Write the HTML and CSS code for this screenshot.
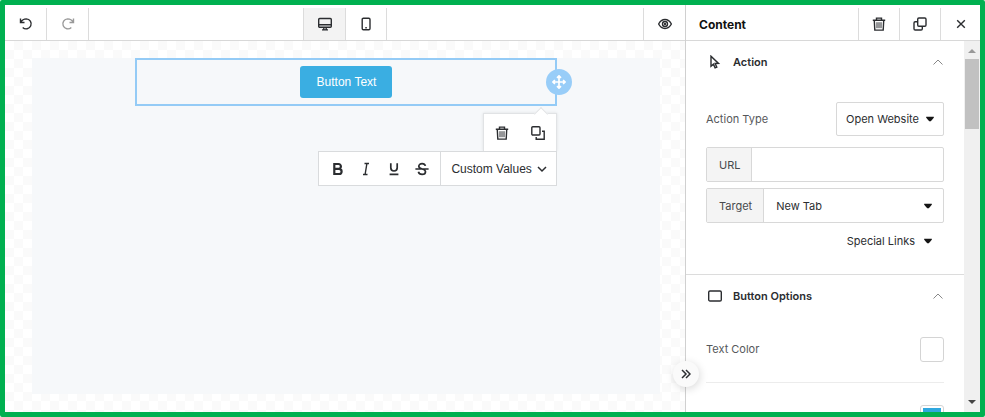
FILE: index.html
```html
<!DOCTYPE html>
<html lang="en">
<head>
<meta charset="utf-8">
<meta name="viewport" content="width=device-width, initial-scale=1">
<title>Email editor</title>
<link rel="stylesheet" href="styles.css">
</head>
<body>
<svg class="sprite" aria-hidden="true">
  <symbol id="trash" viewBox="0 0 14 14"><path d="M.8 3.300h12.400M4.500 3V1.100h5V3M2.300 3.600l.5 9.500h8.400l.5-9.500"/><path stroke-width="1" d="M5 5.200v6M7 5.200v6M9 5.200v6"/></symbol>
  <symbol id="caret" viewBox="0 0 8 6"><path d="M.2.700h7.600v1L4.800 5.200H3.200L.2 1.700z"/></symbol>
  <symbol id="up" viewBox="0 0 12 8"><path d="M1.500 6.500 6 2l4.500 4.500"/></symbol>
</svg>
<div class="app">
  <main class="editor">
    <header class="bar">
      <div class="group">
        <button class="tool line-right" aria-label="Undo"><svg class="icon" viewBox="0 0 14 14"><path d="M1.500 1.500v4h4M1.900 5.200C3 3 5 1.900 7.300 1.900a5 5 0 1 1-3.600 8.600"/></svg></button>
        <button class="tool line-right muted" aria-label="Redo"><svg class="icon" viewBox="0 0 14 14"><path d="M12.500 1.500v4h-4M12.100 5.200C11 3 9 1.900 6.700 1.900a5 5 0 1 0 3.600 8.600"/></svg></button>
      </div>
      <div class="group">
        <button class="tool line-left active" aria-label="Desktop view"><svg class="icon" viewBox="0 0 14 14"><rect x=".7" y="1.500" width="12.600" height="8.800" rx="1"/><path d="M1 7.700h12M5.800 10.200v2.300M8.200 10.200v2.300M4 12.900h6"/></svg></button>
        <button class="tool line-left line-right" aria-label="Mobile view"><svg class="icon" viewBox="0 0 14 14"><rect x="3.200" y="1.200" width="7.800" height="11.600" rx="1.200"/><path d="M6.300 10.700h1.500"/></svg></button>
      </div>
      <div class="group end">
        <button class="tool line-left" aria-label="Preview"><svg class="icon" viewBox="0 0 14 14"><path d="M.6 7C2 4.300 4.200 2.500 7 2.500S12 4.300 13.400 7C12 9.700 9.800 11.500 7 11.500S2 9.700.6 7z"/><circle cx="7" cy="7" r="2.500"/><circle cx="7" cy="7" r=".5"/></svg></button>
      </div>
    </header>
    <div class="canvas">
      <div class="sheet">
        <div class="block">
          <button class="cta">Button Text</button>
          <button class="move" aria-label="Move"><svg class="icon bold" viewBox="0 0 14 14"><path d="M7 .9v12.200M.9 7h12.200M5 2.900l2-2 2 2M5 11.100l2 2 2-2M2.900 5l-2 2 2 2M11.100 5l2 2-2 2"/></svg></button>
          <div class="popover">
            <div class="actions">
              <button class="plain" aria-label="Delete"><svg class="icon" viewBox="0 0 14 14"><use href="#trash"/></svg></button>
              <button class="plain" aria-label="Duplicate"><svg class="icon" viewBox="0 0 14 14"><rect x=".8" y=".8" width="8.200" height="8.200" rx="1"/><path d="M11 5.200h2.200v8H5.200V11"/></svg></button>
            </div>
            <div class="format">
              <div class="styles">
                <button class="plain" aria-label="Bold"><svg class="icon strong" viewBox="0 0 14 14"><path d="M3.300 2h4.200a2.400 2.400 0 0 1 0 4.800H3.300zM3.300 6.800H8a2.600 2.600 0 0 1 0 5.200H3.300z"/></svg></button>
                <button class="plain" aria-label="Italic"><svg class="icon" viewBox="0 0 14 14"><path d="M5.500 1.500H10M4 12.500h4.500M7.900 1.500 6.100 12.500"/></svg></button>
                <button class="plain" aria-label="Underline"><svg class="icon bold" viewBox="0 0 14 14"><path d="M3.800 1.200v4.600a3.200 3.200 0 0 0 6.400 0V1.200M2.600 12.300h8.800"/></svg></button>
                <button class="plain" aria-label="Strikethrough"><svg class="icon bold" viewBox="0 0 14 14"><path d="M10.400 3.900C10 2.300 8.900 1.600 7.100 1.600 5.200 1.600 3.800 2.600 3.800 4.200c0 1.700 1.700 2.300 3.400 2.800s3.300 1.200 3.300 2.700-1.500 2.700-3.400 2.700c-1.900 0-3.300-.9-3.700-2.600M.4 7h13.200"/></svg></button>
              </div>
              <button class="values">Custom Values<svg class="chevron" viewBox="0 0 10 10"><path d="m1 3 4 4 4-4"/></svg></button>
            </div>
          </div>
        </div>
      </div>
    </div>
  </main>
  <aside class="panel">
    <header class="bar">
      <h1 class="title">Content</h1>
      <button class="tool line-left" aria-label="Delete"><svg class="icon" viewBox="0 0 14 14"><use href="#trash"/></svg></button>
      <button class="tool line-left" aria-label="Duplicate"><svg class="icon" viewBox="0 0 14 14"><rect x="4.700" y="1" width="8.300" height="8.300" rx="1.200"/><path d="M4.500 4.700H2.200A1.200 1.200 0 0 0 1 5.900v5.900A1.200 1.200 0 0 0 2.200 13h5.900a1.200 1.200 0 0 0 1.200-1.200V9.500"/></svg></button>
      <button class="tool line-left" aria-label="Close"><svg class="icon" viewBox="0 0 14 14"><path d="m3.200 3.200 7.600 7.600M10.800 3.200l-7.600 7.600"/></svg></button>
    </header>
    <div class="scroller">
      <div class="content">
        <section class="section">
          <button class="heading"><svg class="icon" viewBox="0 0 14 14"><path d="M3 1.200v10l2.400-2.100 1.700 3.800 1.700-.8-1.700-3.600 3.400-.1z"/></svg><span>Action</span><svg class="fold" viewBox="0 0 12 8"><use href="#up"/></svg></button>
          <div class="row type-row">
            <label class="label" for="type">Action Type</label>
            <div class="picker boxed"><select id="type"><option>Open Website</option></select><svg class="caret" viewBox="0 0 8 6"><use href="#caret"/></svg></div>
          </div>
          <div class="field"><label class="addon" for="url">URL</label><input id="url" type="text"></div>
          <div class="field"><label class="addon" for="target">Target</label><div class="picker grow"><select id="target"><option>New Tab</option></select><svg class="caret" viewBox="0 0 8 6"><use href="#caret"/></svg></div></div>
          <button class="links">Special Links<svg class="caret" viewBox="0 0 8 6"><use href="#caret"/></svg></button>
        </section>
        <section class="section">
          <button class="heading"><svg class="icon" viewBox="0 0 14 14"><rect x=".7" y="2" width="12.600" height="10" rx="1.300"/></svg><span>Button Options</span><svg class="fold" viewBox="0 0 12 8"><use href="#up"/></svg></button>
          <div class="row color-row"><span class="label">Text Color</span><button class="swatch" aria-label="Text color"></button></div>
          <div class="row color-row"><span class="label"></span><button class="swatch blue" aria-label="Background color"></button></div>
        </section>
      </div>
      <div class="track" aria-hidden="true">
        <svg class="arrow dim" viewBox="0 0 8 6"><path d="M0 5h8L4 1z"/></svg>
        <div class="thumb"></div>
        <svg class="arrow" viewBox="0 0 8 6"><path d="M0 1h8L4 5z"/></svg>
      </div>
    </div>
    <button class="collapse" aria-label="Collapse panel"><svg class="chevron" viewBox="0 0 10 10"><path d="m1 1 4 4-4 4M5 1l4 4-4 4"/></svg></button>
  </aside>
</div>
</body>
</html>
```

FILE: styles.css
```css
* { box-sizing: border-box; }

body {
  margin: 0;
  color: #2b2d30;
  font: 12px/16px Inter, "Liberation Sans", sans-serif;
}

button, input, select {
  margin: 0;
  padding: 0;
  border: 0;
  background: none;
  color: inherit;
  font: inherit;
}

button { cursor: pointer; }

.sprite { position: absolute; width: 0; height: 0; }

.app {
  display: grid;
  grid-template-columns: minmax(0, 1fr) 295px;
  height: 100vh;
  border: 5px solid #00b050;
  border-radius: 2px;
  background: #fff;
  overflow: hidden;
}

.editor, .panel {
  display: flex;
  flex-direction: column;
  min-height: 0;
}

/* Top bars */
.bar {
  display: flex;
  flex: none;
  height: 36px;
  padding-top: 3px;
  border-bottom: 1px solid #d8d8d8;
}

.editor .bar {
  display: grid;
  grid-template-columns: 1fr auto 1fr;
}

.group { display: flex; }
.end { justify-content: flex-end; }

.tool {
  display: flex;
  align-items: center;
  justify-content: center;
  width: 41px;
}

.line-left { border-left: 1px solid #dcdcdc; }
.line-right { border-right: 1px solid #dcdcdc; }
.group .tool { width: 42px; }
.active { background: #f3f3f3; }
.muted { color: #999; }

.icon {
  display: block;
  width: 14px;
  height: 14px;
  fill: none;
  stroke: currentColor;
  stroke-width: 1.4;
}

.bold { stroke-width: 1.7; }
.strong { stroke-width: 2.2; }

/* Canvas */
.canvas {
  display: flex;
  flex: 1;
  min-height: 0;
  padding: 17px 25px 18px 27px;
  background: repeating-conic-gradient(#fafafa 0 25%, #fff 0 50%) 0 0 / 18px 18px;
}

.sheet { flex: 1; background: #f6f8fa; }

.block {
  position: relative;
  display: flex;
  justify-content: center;
  width: calc(67% + 1px);
  margin: 0 auto;
  padding: 6px;
  border: 2px solid #94cbf6;
}

.cta {
  height: 32px;
  padding: 0 16px 0 17px;
  border-radius: 3px;
  background: #3aaee2;
  color: #fff;
  font-family: "Liberation Sans", sans-serif;
}

.move {
  position: absolute;
  top: 9px;
  right: -17px;
  display: grid;
  place-items: center;
  width: 26px;
  height: 26px;
  border-radius: 50%;
  background: #98cdf8;
  color: #fff;
}

.popover {
  position: absolute;
  top: 53px;
  right: -2px;
  display: flex;
  flex-direction: column;
  align-items: flex-end;
}

.actions {
  position: relative;
  display: flex;
  align-items: center;
  justify-content: space-around;
  width: 74px;
  height: 38px;
  border: 1px solid #e1e3e5;
  border-bottom: 0;
  background: #fff;
  box-shadow: 0 0 3px #0000001a;
}

.actions::before {
  position: absolute;
  top: -5px;
  right: 10px;
  width: 9px;
  height: 9px;
  border: solid #e1e3e5;
  border-width: 1px 0 0 1px;
  background: #fff;
  content: "";
  transform: rotate(45deg);
}

.format {
  position: relative;
  display: flex;
  height: 35px;
  border: 1px solid #d9dbdd;
  background: #fff;
}

.styles { display: flex; padding: 0 4px 0 5px; }

.plain {
  display: flex;
  align-items: center;
  justify-content: center;
  width: 28px;
}

.values {
  display: flex;
  align-items: center;
  gap: 5px;
  padding: 0 9px 0 10px;
  border-left: 1px solid #d9dbdd;
  font-family: "Liberation Sans", sans-serif;
  white-space: nowrap;
}

.chevron {
  width: 10px;
  height: 10px;
  fill: none;
  stroke: currentColor;
  stroke-width: 1.5;
}

/* Settings panel */
.panel {
  position: relative;
  border-left: 1px solid #d0d0d0;
}

.panel .tool:last-child { width: 40px; }

.title {
  flex: 1;
  margin: 0;
  padding-left: 13px;
  color: #111;
  font-size: 12px;
  font-weight: 700;
  line-height: 34px;
}

.scroller { display: flex; flex: 1; min-height: 0; }

.content { flex: 1; overflow: hidden; }

.section { padding: 0 20px; }
.section + .section { border-top: 1px solid #dcdcdc; }

.heading {
  display: flex;
  align-items: center;
  gap: 11px;
  width: 100%;
  height: 41px;
  padding-left: 2px;
  font-size: 11px;
  font-weight: 600;
  text-align: left;
}

.heading span { flex: 1; }

.fold {
  width: 12px;
  height: 8px;
  fill: none;
  stroke: #888;
}

.row {
  display: flex;
  align-items: center;
  justify-content: space-between;
}

.type-row { margin: 20px 0 11px; }

.label { color: #56585b; font-size: 11px; }

.picker { display: grid; align-items: center; height: 33px; }
.picker > * { grid-area: 1 / 1; }
.picker .caret { justify-self: end; margin-right: 11px; }

.picker select {
  width: 100%;
  height: 100%;
  padding: 0 30px 0 12px;
  appearance: none;
  font-size: 11px;
}

.boxed {
  height: 34px;
  border: 1px solid #d8d8d8;
  border-radius: 2px;
}

.boxed select { padding: 0 24px 0 9px; }
.boxed .caret { margin-right: 9px; }
.grow { flex: 1; }

.caret {
  width: 8px;
  height: 6px;
  fill: #151515;
  pointer-events: none;
}

.field {
  display: flex;
  height: 35px;
  margin-bottom: 6px;
  border: 1px solid #d8d8d8;
  border-radius: 2px;
}

.field input { flex: 1; min-width: 0; padding: 0 10px; }

.addon {
  padding: 0 11px 0 12px;
  border-right: 1px solid #d8d8d8;
  background: #f4f4f4;
  color: #484a4d;
  font-size: 11px;
  line-height: 34px;
}

.links {
  display: flex;
  align-items: center;
  gap: 9px;
  height: 24px;
  margin: 0 0 21px auto;
  padding-right: 12px;
  font-size: 11px;
}

.color-row { height: 69px; border-bottom: 1px solid #ececec; }

.heading + .color-row { height: 67px; }

.swatch {
  width: 24px;
  height: 25px;
  border: 1px solid #d4d4d4;
  border-radius: 3px;
}

.blue { padding: 2px; background: #2fa8df content-box; }

/* Scroll indicator */
.track {
  display: flex;
  flex-direction: column;
  align-items: center;
  justify-content: space-between;
  width: 16px;
  padding: 7px 0;
  background: #f0f0f0;
}

.thumb {
  width: 14px;
  height: 70px;
  margin: 5px 0 auto;
  background: #c1c1c1;
}

.arrow { width: 8px; height: 6px; fill: #444; }
.dim { fill: #999; }

.collapse {
  position: absolute;
  bottom: 25px;
  left: -13px;
  display: grid;
  place-items: center;
  width: 26px;
  height: 26px;
  border-radius: 50%;
  background: #fafafa;
  box-shadow: 1px 2px 8px #00000026;
}
```
